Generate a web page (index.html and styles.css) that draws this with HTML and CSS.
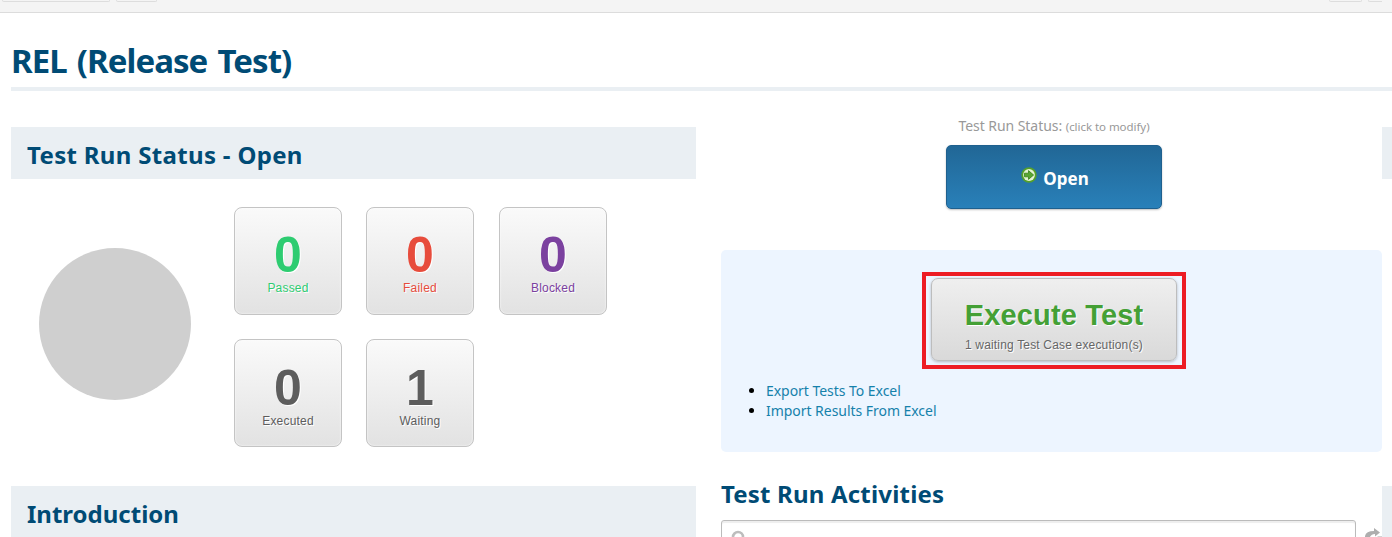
FILE: index.html
```html
<!DOCTYPE html>
<html lang="en">
<head>
<meta charset="utf-8">
<title>REL (Release Test)</title>
<link rel="stylesheet" href="styles.css">
</head>
<body>
<header class="toolbar">
  <span class="tool tool-wide"></span>
  <span class="tool tool-small"></span>
  <span class="tool tool-right"></span>
  <span class="tool tool-cut"></span>
</header>
<main class="page">
  <h1 class="title"><span>REL (Release Test)</span></h1>
  <div class="columns">
    <section class="left">
      <h2 class="band"><span class="t-status">Test Run Status - Open</span></h2>
      <div class="summary">
        <div class="pie"></div>
        <div class="tiles">
          <div class="tile passed"><b>0</b><span>Passed</span></div>
          <div class="tile failed"><b>0</b><span>Failed</span></div>
          <div class="tile blocked"><b>0</b><span>Blocked</span></div>
          <div class="tile lower"><b>0</b><span>Executed</span></div>
          <div class="tile lower"><b>1</b><span>Waiting</span></div>
        </div>
      </div>
      <h2 class="band"><span>Introduction</span></h2>
    </section>
    <section class="right">
      <p class="status"><span>Test Run Status:</span> <small>(click to modify)</small></p>
      <button class="open">
        <svg class="open-icon" width="16" height="16" viewBox="0 0 16 16">
          <circle cx="8" cy="8" r="7.7" fill="#55a02a"/>
          <circle cx="8" cy="8" r="5.9" fill="#e4f3d3"/>
          <path d="M3.5 6.2h4V3.6L12.6 8l-5.1 4.4V9.8h-4z" fill="#58a632" stroke="#398018" stroke-width=".8"/>
        </svg>
        <span>Open</span>
      </button>
      <div class="panel">
        <div class="highlight">
          <button class="execute"><b>Execute Test</b><span>1 waiting Test Case execution(s)</span></button>
        </div>
        <ul class="links">
          <li><a>Export Tests To Excel</a></li>
          <li><a>Import Results From Excel</a></li>
        </ul>
      </div>
      <h2 class="activities"><span>Test Run Activities</span></h2>
      <div class="search">
        <div class="field">
          <svg width="20" height="20" viewBox="0 0 20 20" fill="none" stroke="#bdbdbd" stroke-width="2.6"><circle cx="8" cy="7" r="5"/><path d="M8 12v6"/></svg>
        </div>
        <svg class="share" width="17" height="20" viewBox="0 0 17 20">
          <path d="M0 12V8Q1 3 9 3V0l6 4.500-5 4V6Q5 6 4 12z" fill="#aeaeae"/>
          <path d="M10 11l3-3h4v4z" fill="#d3d3d3"/>
        </svg>
      </div>
    </section>
    <aside class="edge"><div class="strip"></div><div class="strip"></div></aside>
  </div>
</main>
</body>
</html>
```
FILE: styles.css
```css
* { box-sizing: border-box; }
body { margin: 0; height: 537px; overflow: hidden; background: #fff; font-family: "Noto Sans", "Open Sans", sans-serif; }
h1, h2, p, ul { margin: 0; padding: 0; }
span, b, a { white-space: nowrap; }
button { font-family: inherit; margin: 0; padding: 0; }

.toolbar { height: 13px; background: #f4f4f4; border-bottom: 1px solid #dcdcdc; display: flex; padding-left: 2px; }
.tool { height: 2px; border: 1px solid #ddd; border-top: 0; border-radius: 0 0 3px 3px; flex: none; }
.tool-wide { width: 108px; margin-right: 6px; }
.tool-small { width: 41px; }
.tool-right { width: 33px; margin: 0 6px 0 auto; }
.tool-cut { width: 14px; border-right: 0; margin-right: 10px; border-radius: 0 0 0 3px; }

.page { padding-left: 11px; }
.title { height: 78px; padding-top: 25px; border-bottom: 4px solid #eaeff3; font-size: 33px; line-height: 45px; letter-spacing: -.95px; word-spacing: 2.5px; color: #004b75; }
.columns { display: grid; grid-template-columns: 685px 25px 661px 1fr; }
.left { grid-column: 1; padding-top: 36px; }
.right { grid-column: 3; padding-top: 25px; }
.edge { grid-column: 4; padding-top: 36px; display: grid; gap: 307px; align-content: start; }
.strip { height: 52px; background: #eaeff3; }

.band { height: 52px; padding: 5px 16px 0; background: #eaeff3; font-size: 24px; line-height: 46px; color: #004b75; }
.t-status { letter-spacing: .32px; }
.summary { height: 307px; display: flex; padding: 28px 0 0 28px; }
.pie { width: 152px; height: 152px; margin: 41px 43px 0 0; border-radius: 50%; background: #cfcfcf; flex: none; }
.tiles { display: grid; grid-template-columns: 108px 109px 108px; grid-auto-rows: 108px; gap: 24px; align-content: start; }
.tile { width: 108px; display: flex; flex-direction: column; align-items: center; padding-top: 19px; border: 1px solid #c4c4c4; border-radius: 8px; background: linear-gradient(#fafafa, #e2e2e2); box-shadow: inset 0 0 2px #fff; color: #5d5d5d; font-family: "Liberation Sans", Arial, sans-serif; text-shadow: 1px 1px 0 #fff; }
.tile b { font-size: 50px; line-height: 56px; }
.tile span { font-size: 12px; line-height: 14px; letter-spacing: .2px; margin-top: -2px; }
.lower { padding-top: 20px; }
.passed { color: #2ecc71; }
.failed { color: #e74c3c; }
.blocked { color: #7b419f; }

.status { height: 29px; text-align: center; font-size: 14px; line-height: 20px; color: #999; padding-left: 5px; letter-spacing: -.05px; }
.status small { font-size: 11.500px; }
.open { display: flex; align-items: flex-start; justify-content: center; gap: 6px; width: 216px; height: 64px; margin: 0 auto 0 225px; padding: 21px 0 0; border: 1px solid #1f608e; border-radius: 5px; background: linear-gradient(#216796, #2980b9); box-shadow: 0 1px 2px rgba(0,0,0,.25); color: #fff; font-size: 17px; line-height: 24px; font-weight: 700; }
.open-icon { flex: none; margin-left: 2px; }
.panel { height: 202px; margin-top: 41px; padding-top: 22px; background: #edf5ff; border-radius: 5px; }
.highlight { width: 264px; height: 97px; margin: 0 auto 0 201px; border: 4px solid #ed1c24; padding: 2px 4px 0 5px; }
.execute { display: flex; flex-direction: column; align-items: center; width: 246px; height: 83px; padding-top: 19px; border: 1px solid #bdbdbd; border-radius: 7px; background: linear-gradient(#efefef, #d9d9d9); box-shadow: 0 1px 3px rgba(0,0,0,.25); color: #666; font: 12px/14px "Liberation Sans", Arial, sans-serif; text-shadow: 1px 1px 0 #fff; }
.execute b { font-size: 29px; line-height: 34px; letter-spacing: .15px; color: #44a035; }
.execute span { margin-top: 6px; letter-spacing: .17px; }
.links { margin: 12px 0 0; padding-left: 45px; font-size: 14px; line-height: 20px; letter-spacing: -.04px; }
.links a { color: #1581ab; }
.activities { height: 68px; padding-top: 19px; font-size: 24px; line-height: 46px; letter-spacing: .18px; color: #004b75; }
.search { display: flex; height: 17px; overflow: hidden; }
.field { width: 635px; height: 32px; padding: 9px 0 0 8px; border: 1px solid #bbb; border-radius: 3px; box-shadow: inset 0 2px 1px #eee; }
.share { margin: 8px 0 0 9px; flex: none; }
```
